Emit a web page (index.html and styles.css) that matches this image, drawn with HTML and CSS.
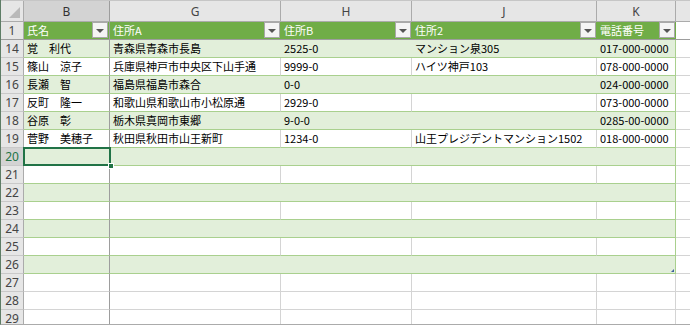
FILE: index.html
```html
<!DOCTYPE html>
<html lang="ja">
<head>
<meta charset="utf-8">
<title>Sheet</title>
<link rel="stylesheet" href="styles.css">
</head>
<body>
<div class="sheet">
  <div class="row colhead">
    <div class="c corner"><span class="corner-tri"></span></div>
    <div class="c sel-col frz">B</div>
    <div class="c">G</div>
    <div class="c">H</div>
    <div class="c">J</div>
    <div class="c">K</div>
    <div class="c"></div>
  </div>
  <div class="row th">
    <div class="c rh">1</div>
    <div class="c frz"><span class="tx">氏名</span><span class="dd"></span></div>
    <div class="c"><span class="tx">住所A</span><span class="dd"></span></div>
    <div class="c"><span class="tx">住所B</span><span class="dd"></span></div>
    <div class="c"><span class="tx">住所2</span><span class="dd"></span></div>
    <div class="c"><span class="tx">電話番号</span><span class="dd"></span></div>
    <div class="c lc"></div>
  </div>
  <div class="row band">
    <div class="c rh">14</div>
    <div class="c frz">覚　利代</div>
    <div class="c">青森県青森市長島</div>
    <div class="c">2525-0</div>
    <div class="c">マンション泉305</div>
    <div class="c kc">017-000-0000</div>
    <div class="c lc"></div>
  </div>
  <div class="row plain">
    <div class="c rh">15</div>
    <div class="c frz">篠山　涼子</div>
    <div class="c">兵庫県神戸市中央区下山手通</div>
    <div class="c">9999-0</div>
    <div class="c">ハイツ神戸103</div>
    <div class="c kc">078-000-0000</div>
    <div class="c lc"></div>
  </div>
  <div class="row band">
    <div class="c rh">16</div>
    <div class="c frz">長瀬　智</div>
    <div class="c">福島県福島市森合</div>
    <div class="c">0-0</div>
    <div class="c"></div>
    <div class="c kc">024-000-0000</div>
    <div class="c lc"></div>
  </div>
  <div class="row plain">
    <div class="c rh">17</div>
    <div class="c frz">反町　隆一</div>
    <div class="c">和歌山県和歌山市小松原通</div>
    <div class="c">2929-0</div>
    <div class="c"></div>
    <div class="c kc">073-000-0000</div>
    <div class="c lc"></div>
  </div>
  <div class="row band">
    <div class="c rh">18</div>
    <div class="c frz">谷原　彰</div>
    <div class="c">栃木県真岡市東郷</div>
    <div class="c">9-0-0</div>
    <div class="c"></div>
    <div class="c kc">0285-00-0000</div>
    <div class="c lc"></div>
  </div>
  <div class="row plain">
    <div class="c rh">19</div>
    <div class="c frz">菅野　美穂子</div>
    <div class="c">秋田県秋田市山王新町</div>
    <div class="c">1234-0</div>
    <div class="c">山王プレジデントマンション1502</div>
    <div class="c kc">018-000-0000</div>
    <div class="c lc"></div>
  </div>
  <div class="row band">
    <div class="c rh sel-row">20</div>
    <div class="c frz active"><span class="selbox"><span class="handle"></span></span></div>
    <div class="c"></div>
    <div class="c"></div>
    <div class="c"></div>
    <div class="c kc"></div>
    <div class="c lc"></div>
  </div>
  <div class="row plain">
    <div class="c rh">21</div>
    <div class="c frz"></div><div class="c"></div><div class="c"></div><div class="c"></div><div class="c kc"></div><div class="c lc"></div>
  </div>
  <div class="row band">
    <div class="c rh">22</div>
    <div class="c frz"></div><div class="c"></div><div class="c"></div><div class="c"></div><div class="c kc"></div><div class="c lc"></div>
  </div>
  <div class="row plain">
    <div class="c rh">23</div>
    <div class="c frz"></div><div class="c"></div><div class="c"></div><div class="c"></div><div class="c kc"></div><div class="c lc"></div>
  </div>
  <div class="row band">
    <div class="c rh">24</div>
    <div class="c frz"></div><div class="c"></div><div class="c"></div><div class="c"></div><div class="c kc"></div><div class="c lc"></div>
  </div>
  <div class="row plain">
    <div class="c rh">25</div>
    <div class="c frz"></div><div class="c"></div><div class="c"></div><div class="c"></div><div class="c kc"></div><div class="c lc"></div>
  </div>
  <div class="row band last">
    <div class="c rh">26</div>
    <div class="c frz"></div><div class="c"></div><div class="c"></div><div class="c"></div><div class="c kc"><span class="resize"></span></div><div class="c lc"></div>
  </div>
  <div class="row out">
    <div class="c rh">27</div>
    <div class="c frz"></div><div class="c"></div><div class="c"></div><div class="c"></div><div class="c"></div><div class="c"></div>
  </div>
  <div class="row out">
    <div class="c rh">28</div>
    <div class="c frz"></div><div class="c"></div><div class="c"></div><div class="c"></div><div class="c"></div><div class="c"></div>
  </div>
  <div class="row out">
    <div class="c rh">29</div>
    <div class="c frz"></div><div class="c"></div><div class="c"></div><div class="c"></div><div class="c"></div><div class="c"></div>
  </div>
</div>
</body>
</html>
```

FILE: styles.css
```css
* { box-sizing: border-box; }
html, body { margin: 0; padding: 0; background: #ffffff; }
.sheet {
  width: 690px;
  height: 325px;
  overflow: hidden;
  border-left: 1px solid #5e7d66;
  border-bottom: 1px solid #ababab;
  font-family: "Noto Sans CJK JP", "Noto Sans", sans-serif;
  font-size: 11px;
  color: #000;
}
.row {
  display: grid;
  grid-template-columns: 23px 86px 171px 131px 185px 79px 1fr;
  height: 18px;
}
.c {
  position: relative;
  display: flex;
  align-items: center;
  padding-left: 3px;
  white-space: nowrap;
  overflow: visible;
  line-height: 17px;
  border-bottom: 1px solid #d4d4d4;
}

/* column header */
.colhead { height: 22px; border-top: 1px solid #c6c6c6; }
.colhead .c {
  background: #e6e6e6;
  border-right: 1px solid #ababab;
  border-bottom: 1px solid #ababab;
  justify-content: center;
  padding-left: 0;
  font-family: "Noto Sans", "Liberation Sans", sans-serif;
  font-size: 12px;
  color: #444;
}
.colhead .c:last-child { border-right: none; }
.colhead .corner { justify-content: flex-end; align-items: flex-end; }
.corner-tri {
  width: 0; height: 0;
  margin: 0 3px 3px 0;
  border-left: 11px solid transparent;
  border-bottom: 11px solid #b9b9b9;
}
.colhead .sel-col {
  background: #d3d3d3;
  color: #333;
  border-right: 3px double #a0a0a0;
}

/* row headers */
.c.rh {
  background: #e6e6e6;
  border-right: 1px solid #ababab;
  border-bottom: 1px solid #c9c9c9;
  justify-content: center;
  padding-left: 0;
  font-family: "Noto Sans", "Liberation Sans", sans-serif;
  font-size: 12px;
  color: #444;
}
.c.rh.sel-row {
  background: #d3d3d3;
  color: #217346;
  border-right: 1px solid #217346;
}

/* freeze column line */
.c.frz { border-right: 1px solid #9d9d9d; }

/* table header row */
.th .c { background: #70ad47; color: #fff; border-bottom: 1px solid #9d9d9d; }
.th .c.rh { background: #e6e6e6; color: #444; border-bottom: 1px solid #9d9d9d; }
.th .c.lc { background: #fff; }
.th .tx { flex: 1; }
.dd {
  width: 16px;
  height: 16px;
  margin-right: 1px;
  margin-top: -1px;
  background: #f4f4f4;
  border: 1px solid #a8a8a8;
  display: flex;
  align-items: center;
  justify-content: center;
}
.dd::after {
  content: "";
  width: 0; height: 0;
  margin-top: 1px;
  border-left: 4px solid transparent;
  border-right: 4px solid transparent;
  border-top: 4px solid #555;
}

/* banded rows */
.band .c { background: #e2efda; border-bottom: 1px solid #a9d08e; }
.plain .c { background: #fff; border-bottom: 1px solid #a9d08e; border-right: 1px solid #d4d4d4; }
.band .c.rh, .plain .c.rh { background: #e6e6e6; border-bottom: 1px solid #c9c9c9; border-right: 1px solid #ababab; }
.band .c.rh.sel-row { background: #d3d3d3; border-right: 1px solid #217346; }
.band .c.frz, .plain .c.frz { border-right: 1px solid #9d9d9d; }
.band .c.kc, .plain .c.kc { border-right: 1px solid #a9d08e; }
.band .c.lc, .plain .c.lc { background: #fff; border-bottom: 1px solid #d4d4d4; border-right: none; }

/* rows outside the table */
.out .c { background: #fff; border-right: 1px solid #d4d4d4; border-bottom: 1px solid #d4d4d4; }
.out .c:last-child { border-right: none; }
.out .c.rh { background: #e6e6e6; border-right: 1px solid #ababab; border-bottom: 1px solid #c9c9c9; }
.out .c.frz { border-right: 1px solid #9d9d9d; }

/* active cell */
.selbox {
  position: absolute;
  left: -1px;
  top: -1px;
  width: 88px;
  height: 19px;
  border: 2px solid #217346;
  z-index: 2;
}
.handle {
  position: absolute;
  right: -5px;
  bottom: -5px;
  width: 6px;
  height: 6px;
  background: #217346;
  border: 1px solid #fff;
}

.resize {
  position: absolute;
  right: 1px;
  bottom: 1px;
  width: 0; height: 0;
  border-left: 3px solid transparent;
  border-bottom: 3px solid #3d5f9e;
}
```
